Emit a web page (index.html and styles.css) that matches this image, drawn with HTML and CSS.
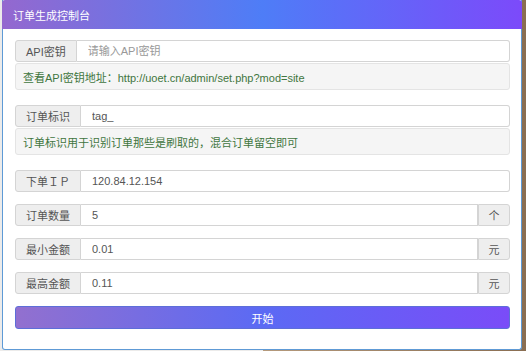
FILE: index.html
```html
<!DOCTYPE html>
<html lang="zh-CN">
<head>
<meta charset="utf-8">
<title>订单生成控制台</title>
<link rel="stylesheet" href="styles.css">
</head>
<body>
<div class="panel">
  <div class="panel-heading">订单生成控制台</div>
  <div class="panel-body">
    <div class="field">
      <div class="input-group">
        <span class="addon">API密钥</span>
        <input class="control" type="text" placeholder="请输入API密钥">
      </div>
      <div class="help">查看API密钥地址：http://uoet.cn/admin/set.php?mod=site</div>
    </div>
    <div class="field">
      <div class="input-group">
        <span class="addon">订单标识</span>
        <input class="control" type="text" value="tag_">
      </div>
      <div class="help">订单标识用于识别订单那些是刷取的，混合订单留空即可</div>
    </div>
    <div class="input-group">
      <span class="addon">下单ＩＰ</span>
      <input class="control" type="text" value="120.84.12.154">
    </div>
    <div class="input-group">
      <span class="addon">订单数量</span>
      <input class="control" type="text" value="5">
      <span class="addon addon-end">个</span>
    </div>
    <div class="input-group">
      <span class="addon">最小金额</span>
      <input class="control" type="text" value="0.01">
      <span class="addon addon-end">元</span>
    </div>
    <div class="input-group">
      <span class="addon">最高金额</span>
      <input class="control" type="text" value="0.11">
      <span class="addon addon-end">元</span>
    </div>
    <button class="btn-start" type="button">开始</button>
  </div>
</div>
</body>
</html>
```

FILE: styles.css
```css
html, body {
  margin: 0;
  padding: 0;
}

body {
  width: 526px;
  height: 351px;
  overflow: hidden;
  background: linear-gradient(to right, #ecebea 0, #ecebea 50%, #b59a7c 50%, #8a6e52 100%);
  font-family: "Liberation Sans", "Noto Sans CJK SC", sans-serif;
  font-size: 11px;
  color: #555;
}

.panel {
  margin-left: 2px;
  width: 520px;
  height: 350px;
  box-sizing: border-box;
  background: #fff;
  border: 1px solid #5e9ad6;
  border-top: 0;
  border-radius: 0 0 3px 3px;
  display: flex;
  flex-direction: column;
}

.panel-heading {
  height: 29px;
  box-sizing: border-box;
  padding: 0 11px;
  display: flex;
  align-items: center;
  color: #fff;
  font-size: 11px;
  background: linear-gradient(to right, #9468cf 0%, #4e7df7 50%, #7c4afa 100%);
  border-radius: 3px 3px 0 0;
  margin: 0 -1px;
}

.panel-body {
  padding: 11px 11px 0 12px;
  display: flex;
  flex-direction: column;
}

.field {
  display: flex;
  flex-direction: column;
  margin-bottom: 15px;
}

.field .input-group {
  margin-bottom: 0;
}

.input-group {
  display: flex;
  height: 22px;
  margin-bottom: 12px;
}

.addon {
  box-sizing: border-box;
  height: 22px;
  display: flex;
  align-items: center;
  justify-content: center;
  padding: 0 10px;
  background: #eeeeee;
  border: 1px solid #d4d4d4;
  border-radius: 3px 0 0 3px;
  color: #555;
  white-space: nowrap;
}

.addon-end {
  width: 32px;
  padding: 0;
  border-radius: 0 3px 3px 0;
}

.control {
  flex: 1;
  min-width: 0;
  box-sizing: border-box;
  height: 22px;
  margin: 0;
  padding: 0 11px;
  border: 1px solid #d4d4d4;
  border-left: 0;
  border-radius: 0 3px 3px 0;
  font-family: "Liberation Sans", "Noto Sans CJK SC", sans-serif;
  font-size: 11px;
  color: #555;
  background: #fff;
  outline: none;
}

.control:has(+ .addon-end) {
  border-radius: 0;
}

.control::placeholder {
  color: #999;
}

.help {
  margin-top: 1px;
  height: 27px;
  box-sizing: border-box;
  display: flex;
  align-items: center;
  padding: 0 7px;
  background: #f5f5f5;
  border: 1px solid #e4e4e4;
  border-radius: 3px;
  color: #3f7640;
  font-size: 11px;
}

.btn-start {
  height: 23px;
  margin: 0;
  padding: 0;
  border: 1px solid #5d6ed8;
  border-radius: 3px;
  background: linear-gradient(to right, #9270cf 0%, #5b6af4 50%, #7a4cf8 100%);
  color: #fff;
  font-family: "Liberation Sans", "Noto Sans CJK SC", sans-serif;
  font-size: 11px;
}
```
